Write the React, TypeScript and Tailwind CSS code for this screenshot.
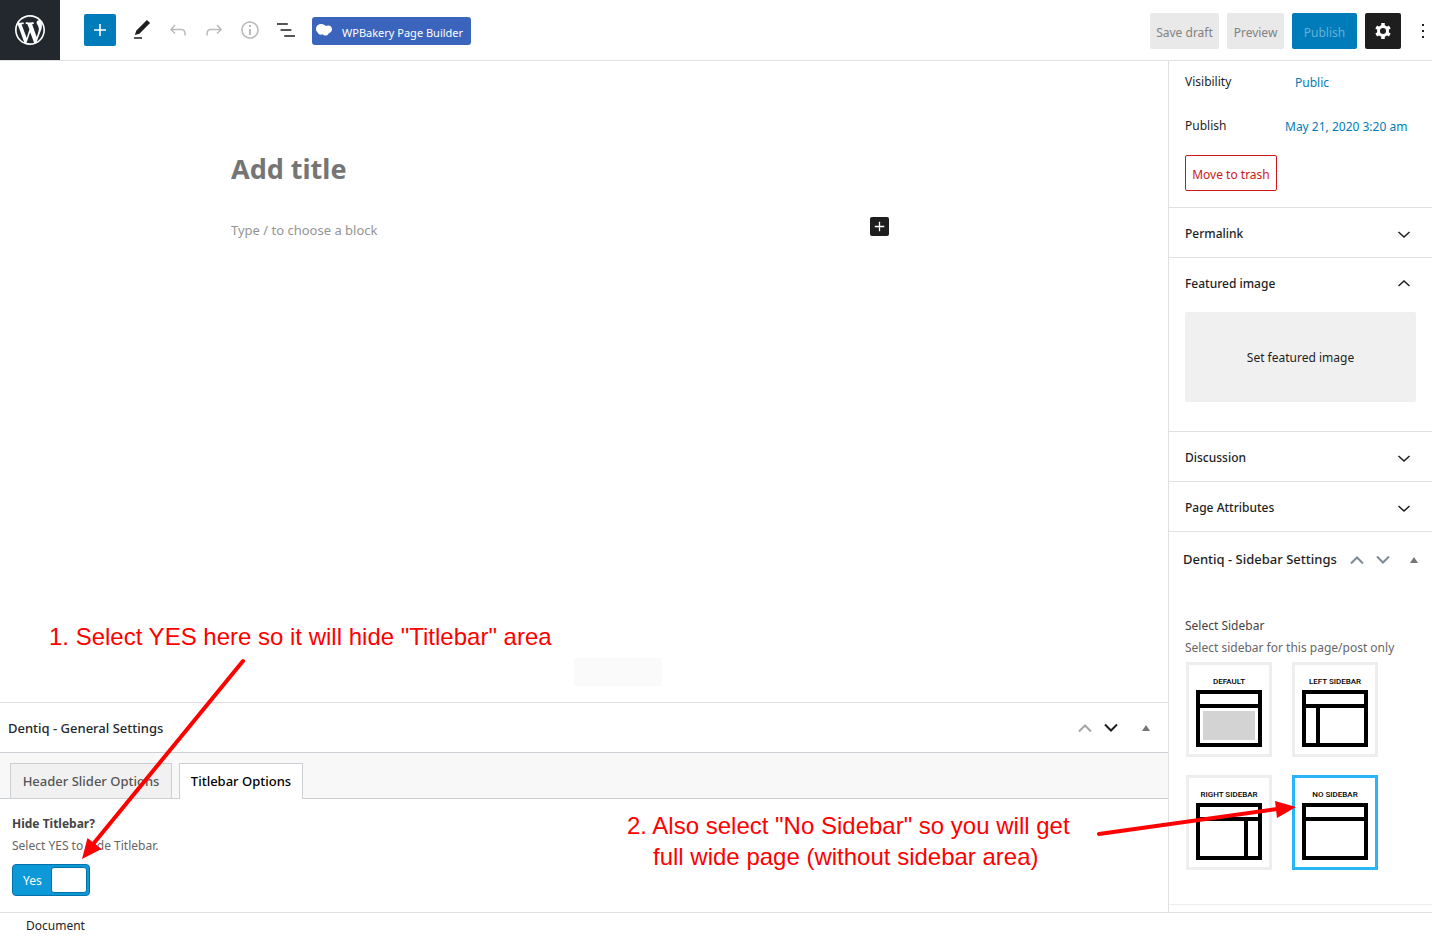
import { useState } from 'react';
import type { ReactNode } from 'react';

const ICONS = {
  plus: 'M18 11.2h-5.2V6h-1.6v5.2H6v1.6h5.2V18h1.6v-5.2H18z',
  edit: 'M20.1 5.1L16.9 2 6.2 12.7l-1.3 4.4 4.5-1.3L20.1 5.1zM4 20.8h8v-1.5H4v1.5z',
  undo: 'M18.3 11.7c-.6-.6-1.4-.9-2.3-.9H6.7l2.9-3.3-1.1-1-4.5 5L8.5 16l1-1-2.7-2.7H16c.5 0 .9.2 1.3.5 1 1 1 3.4 1 4.5v.3h1.5v-.2c0-1.5 0-4.3-1.5-5.7z',
  redo: 'M15.6 6.5l-1.1 1 2.9 3.3H8c-.9 0-1.7.3-2.3.9-1.4 1.5-1.4 4.2-1.4 5.6v.2h1.5v-.3c0-1.1 0-3.5 1-4.5.3-.3.7-.5 1.3-.5h9.2L14.5 15l1.1 1.1 4.6-4.6-4.6-5z',
  info: 'M12 3.2c-4.8 0-8.8 3.9-8.8 8.8 0 4.8 3.9 8.8 8.8 8.8 4.8 0 8.8-3.9 8.8-8.8 0-4.8-4-8.8-8.8-8.8zm0 16c-4 0-7.2-3.3-7.2-7.2C4.8 8 8 4.8 12 4.8s7.2 3.3 7.2 7.2c0 4-3.2 7.2-7.2 7.2zM11 17h2v-6h-2v6zm0-8h2V7h-2v2z',
  list: 'M13.8 5.2H3v1.5h10.8V5.2zm-3.6 12v1.5H21v-1.5H10.2zm7.2-6H6.6v1.5h10.8v-1.5z',
  more: 'M13 19h-2v-2h2v2zm0-6h-2v-2h2v2zm0-6h-2V5h2v2z',
  down: 'M17 9.4L12 14 7 9.4l-1 1.2 6 5.4 6-5.4z',
  up: 'M12 8l-6 5.4 1 1.2 5-4.6 5 4.6 1-1.2z',
  wordpress:
    'M20 10c0-5.51-4.49-10-10-10C4.48 0 0 4.49 0 10c0 5.52 4.48 10 10 10 5.51 0 10-4.48 10-10zM7.78 15.37L4.37 6.22c.55-.02 1.17-.08 1.17-.08.5-.06.44-1.13-.06-1.11 0 0-1.45.11-2.37.11-.18 0-.37 0-.58-.01C4.12 2.69 6.87 1.11 10 1.11c2.33 0 4.45.87 6.05 2.34-.68-.11-1.65.39-1.65 1.58 0 .74.45 1.36.9 2.1.35.61.55 1.36.55 2.46 0 1.49-1.4 5-1.4 5l-3.03-8.37c.54-.02.82-.17.82-.17.5-.05.44-1.25-.06-1.22 0 0-1.44.12-2.38.12-.87 0-2.33-.12-2.33-.12-.5-.03-.56 1.2-.06 1.22l.92.08 1.26 3.41zM17.41 10c.24-.64.74-1.87.43-4.25.7 1.29 1.05 2.71 1.05 4.25 0 3.29-1.73 6.24-4.4 7.78.97-2.59 1.94-5.2 2.92-7.78zM6.1 18.09C3.12 16.65 1.11 13.53 1.11 10c0-1.3.23-2.48.72-3.59C3.25 10.3 4.67 14.2 6.1 18.09zm4.03-6.63l2.58 6.98c-.86.29-1.76.45-2.71.45-.79 0-1.57-.11-2.29-.33.81-2.38 1.62-4.74 2.42-7.1z',
};

type IconName = keyof typeof ICONS;

const Icon = ({ name, className = 'size-6', viewBox = '0 0 24 24' }: { name: IconName; className?: string; viewBox?: string }) => (
  <svg viewBox={viewBox} className={`shrink-0 fill-current ${className}`} aria-hidden="true">
    <path fillRule="evenodd" clipRule="evenodd" d={ICONS[name]} />
  </svg>
);

const tools: { name: IconName; label: string; className: string }[] = [
  { name: 'edit', label: 'Tools', className: 'text-[#1e1e1e]' },
  { name: 'undo', label: 'Undo', className: 'text-[#bbbbbb]' },
  { name: 'redo', label: 'Redo', className: 'text-[#bbbbbb]' },
  { name: 'info', label: 'Details', className: 'text-[#bbbbbb]' },
  { name: 'list', label: 'Outline', className: 'text-[#1e1e1e]' },
];

const Gear = () => (
  <svg viewBox="0 0 24 24" className="size-6 fill-none stroke-current" aria-hidden="true">
    <circle cx="12" cy="12" r="4.500" strokeWidth="3" />
    <path strokeWidth="3.500" d="M12 4v3M12 17v3M18.800 8l-2.500 1.500M7.700 14.500L5.200 16M18.800 16l-2.500-1.500M7.700 9.500L5.200 8" />
  </svg>
);

const Header = () => (
  <header className="flex h-[61px] items-center overflow-hidden border-b border-[#e0e0e0]">
    <a href="#" aria-label="View pages" className="flex size-[60px] shrink-0 items-center justify-center bg-[#23282e] text-white">
      <Icon name="wordpress" viewBox="-2 -2 24 24" className="size-9" />
    </a>
    <button aria-label="Add block" className="ml-6 flex size-8 shrink-0 items-center justify-center rounded-xs bg-[#007cba] text-white">
      <Icon name="plus" />
    </button>
    <div className="ml-2 flex">
      {tools.map((tool) => (
        <button key={tool.name} aria-label={tool.label} className={`flex size-9 items-center justify-center ${tool.className}`}>
          <Icon name={tool.name} />
        </button>
      ))}
    </div>
    <div className="ml-2 pt-0.5">
      <button className="flex h-7 w-[159px] items-start gap-2.5 rounded-[3px] bg-[#3b64bc] pt-[7px] pl-1 text-[11px] leading-[18px] whitespace-nowrap text-white">
        <svg viewBox="0 0 16 12" className="h-3 w-4 shrink-0 fill-current" aria-hidden="true">
          <path d="M5 0c2 0 3.800 .8 4.800 2.100C10.500 1.700 11.400 1.500 12.300 1.500 14.400 1.500 16 3.200 16 5.200c0 2-1.500 3.600-3.400 4.200-.5 1.300-1.600 2.200-3 2.200-1.200 0-2.200-.5-2.800-1.300-.5.300-1.200.4-2 .4C3.200 10.700 2 9.800 1.700 8.600.6 7.700 0 6.400 0 5c0-2.800 2.200-5 5-5z" />
        </svg>
        WPBakery Page Builder
      </button>
    </div>
    <div className="ml-auto flex shrink-0 gap-2 pt-0.5 text-xs">
      <button className="h-9 w-[69px] rounded-xs bg-[#e9e9e9] pt-1 text-[#828282]">Save draft</button>
      <button className="h-9 w-[57px] rounded-xs bg-[#e9e9e9] pt-1 text-[#828282]">Preview</button>
      <button className="h-9 w-[65px] rounded-xs bg-[#007cba] pt-1 text-[#66b0d6]">Publish</button>
      <button aria-label="Settings" className="flex size-9 items-center justify-center rounded-xs bg-[#1e1e1e] text-white">
        <Gear />
      </button>
    </div>
    <button aria-label="Options" className="ml-1 flex w-[27px] shrink-0 overflow-hidden pt-0.5 pl-1.5 text-[#1e1e1e]">
      <Icon name="more" />
    </button>
  </header>
);

const Triangle = () => (
  <svg viewBox="0 0 8 6" className="h-1.5 w-2 fill-[#72777c]" aria-hidden="true">
    <path d="M4 0l4 6H0z" />
  </svg>
);

const BoxArrow = ({ up, className }: { up?: boolean; className: string }) => (
  <svg viewBox="0 0 14 8" className={`h-2 w-3.5 fill-none stroke-2 ${className}`} aria-hidden="true">
    <path d={up ? 'M1 7.500l6-6 6 6' : 'M1 .500l6 6 6-6'} />
  </svg>
);

const BoxHandles = ({ upClass, downClass, gapClass }: { upClass: string; downClass: string; gapClass: string }) => (
  <div className={`flex items-center ${gapClass}`}>
    <div className="flex">
      <button aria-label="Move up" className="flex h-6 w-[26px] items-center justify-center">
        <BoxArrow up className={upClass} />
      </button>
      <button aria-label="Move down" className="flex h-6 w-[26px] items-center justify-center">
        <BoxArrow className={downClass} />
      </button>
    </div>
    <button aria-label="Toggle panel" className="flex h-6 w-9 items-center justify-center">
      <Triangle />
    </button>
  </div>
);

const Panel = ({ title, open, children }: { title: string; open?: boolean; children?: ReactNode }) => (
  <section className="border-b border-[#e0e0e0]">
    <button className="flex h-[49px] w-full items-center justify-between px-4 pt-0.5 text-xs font-medium text-[#1e1e1e]">
      {title}
      <Icon name={open ? 'up' : 'down'} />
    </button>
    {children}
  </section>
);

const layouts = [
  { id: 'default', label: 'DEFAULT' },
  { id: 'left', label: 'LEFT SIDEBAR' },
  { id: 'right', label: 'RIGHT SIDEBAR' },
  { id: 'none', label: 'NO SIDEBAR' },
];

const LayoutPreview = ({ id }: { id: string }) => (
  <svg viewBox="0 0 66 57" className="h-[57px] w-[66px]" aria-hidden="true">
    <path fillRule="evenodd" d="M0 0h66v57H0zM4 4v49h58V4z" />
    <path d="M4 14h58v4H4z" />
    {id === 'default' && <path fill="#d3d3d3" d="M7 21h52v29H7z" />}
    {id === 'left' && <path d="M14 18h4v35h-4z" />}
    {id === 'right' && <path d="M48 18h4v35h-4z" />}
  </svg>
);

const SidebarSettings = () => {
  const [selected, setSelected] = useState('none');

  return (
    <section className="border-b border-[#eeeeee]">
      <div className="flex h-14 items-center justify-between pl-3.5 whitespace-nowrap">
        <h2 className="text-[13px] font-medium text-[#1e1e1e]">Dentiq - Sidebar Settings</h2>
        <BoxHandles upClass="stroke-[#7e8993]" downClass="stroke-[#7e8993]" gapClass="gap-0" />
      </div>
      <div role="radiogroup" aria-labelledby="select-sidebar" className="px-4 pt-[27px] pb-[34px] text-xs leading-[22px]">
        <h3 id="select-sidebar" className="text-[#444444]">Select Sidebar</h3>
        <p className="whitespace-nowrap text-[#666666]">Select sidebar for this page/post only</p>
        <div className="ml-px grid grid-cols-[86px_86px] gap-x-5 gap-y-[18px] pt-[3px]">
          {layouts.map((layout) => (
            <label
              key={layout.id}
              className={`relative flex h-[95px] cursor-pointer flex-col items-center border-3 pt-2 ${selected === layout.id ? 'border-[#29b6f6]' : 'border-[#eeeeee]'}`}
            >
              <input
                type="radio"
                name="sidebar"
                className="sr-only"
                checked={selected === layout.id}
                onChange={() => setSelected(layout.id)}
              />
              <span className="h-[17px] font-['Roboto',sans-serif] text-[8px] leading-[17px] font-medium whitespace-nowrap text-black">
                {layout.label}
              </span>
              <LayoutPreview id={layout.id} />
            </label>
          ))}
        </div>
      </div>
    </section>
  );
};

const Sidebar = () => (
  <aside className="w-[264px] shrink-0 border-l border-[#e0e0e0]">
    <div className="border-b border-[#e0e0e0] px-4 pt-[3px] pb-4 text-xs text-[#1e1e1e]">
      <div className="flex h-9 items-center">
        <span className="w-[110px]">Visibility</span>
        <button className="pt-0.5 text-[#007cba]">Public</button>
      </div>
      <div className="mt-2 flex h-9 items-center">
        <span className="w-[100px]">Publish</span>
        <button className="pt-0.5 whitespace-nowrap text-[#007cba]">May 21, 2020 3:20 am</button>
      </div>
      <button className="mt-[11px] h-9 w-[92px] rounded-xs border border-[#cc1818] pt-1 whitespace-nowrap text-[#cc1818]">Move to trash</button>
    </div>
    <Panel title="Permalink" />
    <Panel title="Featured image" open>
      <div className="px-4 pt-[5px] pb-[29px]">
        <button className="h-[90px] w-full rounded-xs bg-[#f0f0f0] pt-0.5 text-xs text-[#1e1e1e]">Set featured image</button>
      </div>
    </Panel>
    <Panel title="Discussion" />
    <Panel title="Page Attributes" />
    <SidebarSettings />
  </aside>
);

const GeneralSettings = () => {
  const [hideTitlebar, setHideTitlebar] = useState(true);

  return (
    <section className="border-t border-[#e0e0e0]">
      <div className="flex h-[50px] items-center justify-between border-b border-[#ccd0d4] pr-1 pl-2">
        <h2 className="pt-0.5 text-[13px] font-medium text-[#23282d]">Dentiq - General Settings</h2>
        <BoxHandles upClass="stroke-[#a0a5aa]" downClass="stroke-[#1e1e1e]" gapClass="gap-1" />
      </div>
      <div role="tablist" className="flex h-[46px] items-end gap-[7px] border-b border-[#ccd0d4] bg-[#f8f8f8] pl-2.5 text-[13px] font-medium whitespace-nowrap">
        <button role="tab" aria-selected="false" className="flex h-[35px] w-[162px] items-center justify-center border border-b-0 border-[#ccd0d4] bg-[#f1f1f1] pt-0.5 text-[#555555]">
          Header Slider Options
        </button>
        <button role="tab" aria-selected="true" className="-mb-px flex h-9 w-[124px] items-center justify-center border border-b-0 border-[#ccd0d4] bg-white text-black">
          Titlebar Options
        </button>
      </div>
      <div className="px-3 pt-3.5 pb-4 text-xs leading-[22px]">
        <h3 className="font-bold text-[#444444]">Hide Titlebar?</h3>
        <p className="text-[#666666]">Select YES to hide Titlebar.</p>
        <label className="relative mt-[7px] flex h-8 w-[78px] cursor-pointer items-center justify-between rounded-sm border border-[#0073aa] bg-[#0d99d8] pr-0.5 pl-2.5 text-white">
          <input
            type="checkbox"
            className="sr-only"
            checked={hideTitlebar}
            onChange={(e) => setHideTitlebar(e.target.checked)}
          />
          <span className="pt-0.5">{hideTitlebar ? 'Yes' : 'No'}</span>
          <span className="h-[26px] w-9 rounded-[3px] border border-[#0073aa] bg-white" />
        </label>
      </div>
    </section>
  );
};

const Editor = () => (
  <div className="flex flex-1 flex-col justify-between">
    <div className="max-w-[889px] pt-[88px] pl-[231px]">
      <input
        aria-label="Add title"
        placeholder="Add title"
        className="block h-10 w-full text-[27px] font-bold placeholder:text-[#757575] focus:outline-none"
      />
      <div className="mt-7 flex items-start justify-between">
        <input
          aria-label="Block"
          placeholder="Type / to choose a block"
          className="h-[26px] flex-1 text-[13px] placeholder:text-[#949494] focus:outline-none"
        />
        <button aria-label="Add block" className="flex size-[19px] items-center justify-center rounded-xs bg-[#1e1e1e] text-white">
          <Icon name="plus" className="size-[19px]" />
        </button>
      </div>
    </div>
    <div className="mb-4 ml-[574px] h-7 w-[88px] bg-[#fafafa]" />
  </div>
);

// notes and arrows drawn on top of the editor
const Annotations = () => (
  <div className="pointer-events-none absolute inset-0 overflow-hidden font-['Liberation_Sans',Arial,sans-serif] text-2xl leading-[31px] whitespace-nowrap text-[#ff0000]">
    <p className="absolute top-[621px] left-[49px]">1. Select YES here so it will hide "Titlebar" area</p>
    <p className="absolute top-[810px] left-[627px]">
      2. Also select "No Sidebar" so you will get
      <br />
      <span className="pl-[26px]">full wide page (without sidebar area)</span>
    </p>
    <svg viewBox="0 0 1432 937" className="absolute top-0 left-0 h-[937px] w-[1432px]" aria-hidden="true">
      <g stroke="currentColor" strokeWidth="4" strokeLinecap="round">
        <path d="M243 661L94 843" />
        <path d="M1099 834L1277 809" />
      </g>
      <path fill="currentColor" d="M82 859l5.500-21 14 11zM1296 807l-21-6 2 17z" />
    </svg>
  </div>
);

const App = () => (
  <div className="relative flex min-h-screen flex-col bg-white font-['Noto_Sans','Open_Sans',sans-serif]">
    <Header />
    <div className="flex flex-1">
      <main className="flex min-w-0 flex-1 flex-col">
        <Editor />
        <GeneralSettings />
      </main>
      <Sidebar />
    </div>
    <footer className="flex h-[25px] items-center border-t border-[#e0e0e0] pt-0.5 pl-[26px] text-xs text-[#1e1e1e]">Document</footer>
    <Annotations />
  </div>
);

export default App;
